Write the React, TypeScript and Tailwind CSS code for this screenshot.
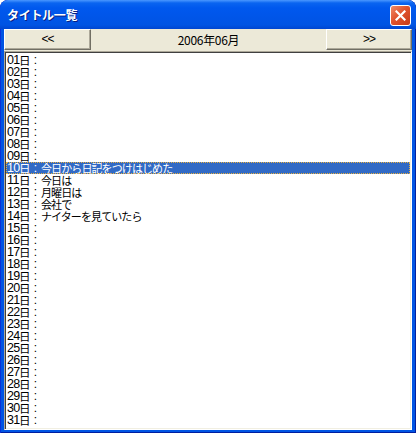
import React from "react";

const entries: Record<number, string> = {
  10: "今日から日記をつけはじめた",
  11: "今日は",
  12: "月曜日は",
  13: "会社で",
  14: "ナイターを見ていたら",
};

const jp = { fontFamily: '"Noto Sans CJK JP", "Noto Sans", sans-serif' };
const lat = { fontFamily: '"Liberation Sans", sans-serif' };

export default function App() {
  const rows = Array.from({ length: 31 }, (_, i) => i + 1);
  return (
    <div className="w-[416px] h-[433px] bg-white">
      <div className="w-[416px] h-[433px] rounded-t-[8px] bg-[#0054E3] flex flex-col overflow-hidden shadow-[inset_1px_0_#0831D9,inset_-1px_0_#001EA0,inset_0_-1px_#001EA0]">
        {/* Title bar */}
        <div className="h-[29px] shrink-0 flex items-center relative bg-[linear-gradient(to_bottom,#4A97FF_0px,#0A64F0_3px,#0058EE_8px,#0055E8_18px,#0054E3_25px,#0046D0_29px)] rounded-t-[8px]">
          <span
            className="ml-[7px] mt-[1px] text-white font-bold text-[12px] tracking-[-0.3px] leading-none [text-shadow:1px_1px_0_#0A1E80]"
            style={jp}
          >
            タイトル一覧
          </span>
          <div className="absolute left-[390px] top-[5px] w-[21px] h-[21px] rounded-[3px] border border-white bg-[linear-gradient(135deg,#F08B68_0%,#E0532E_45%,#C73A17_100%)] flex items-center justify-center">
            <svg width="11" height="11" viewBox="0 0 11 11">
              <path d="M1.5 1.5 L9.5 9.5 M9.5 1.5 L1.5 9.5" stroke="white" strokeWidth="2.2" strokeLinecap="square" />
            </svg>
          </div>
        </div>
        {/* Client */}
        <div className="flex-1 mx-[4px] mb-[3px] bg-[#ECE9D8] flex flex-col">
          <div className="h-[22px] shrink-0 flex">
            <div className="w-[87px] h-[21px] bg-[#ECE9D8] border-t border-l border-white border-r border-b border-r-[#716F64] border-b-[#716F64] shadow-[inset_-1px_-1px_0_#ACA899] flex items-center justify-center text-[12px] text-black pb-[1px]">
              <span className="tracking-[-1px]" style={lat}>&lt;&lt;</span>
            </div>
            <div className="flex-1 h-[21px] flex items-center justify-center text-[12px] text-black" style={jp}>
              <span className="tracking-[-0.3px]">2006年06月</span>
            </div>
            <div className="w-[86px] h-[21px] bg-[#ECE9D8] border-t border-l border-white border-r border-b border-r-[#716F64] border-b-[#716F64] shadow-[inset_-1px_-1px_0_#ACA899] flex items-center justify-center text-[12px] text-black pb-[1px]">
              <span className="tracking-[-1px]" style={lat}>&gt;&gt;</span>
            </div>
          </div>
          <div className="flex-1 bg-white border-t border-l border-[#ACA899] border-r border-b border-r-white border-b-white shadow-[inset_1px_1px_0_#404040,inset_-1px_-1px_0_#F1EFE2] pt-[2px] pl-[1px] pr-[1px]">
            {rows.map((d) => {
              const sel = d === 10;
              const dd = d.toString().padStart(2, "0");
              return (
                <div
                  key={d}
                  className={
                    "h-[12px] overflow-hidden flex items-center text-[12px] leading-[12px] whitespace-nowrap " +
                    (sel
                      ? "bg-[#316AC5] text-white outline outline-1 outline-dotted outline-[#E8B040] -outline-offset-1"
                      : "text-black")
                  }
                  style={jp}
                >
                  <span className="w-[13px] h-[12px] leading-[12px] pl-[1px] tracking-[-0.6px] text-[12.5px]" style={lat}>{dd}</span>
                  <span className="w-[12px] h-[12px] leading-[12px] text-[11.5px]">日</span>
                  <span className="w-[9px] h-[12px] leading-[12px] text-center" style={lat}>:</span>
                  <span className="h-[12px] leading-[12px] text-[11px] tracking-[-0.9px] pl-[1px]">{entries[d] ?? ""}</span>
                </div>
              );
            })}
          </div>
        </div>
      </div>
    </div>
  );
}
